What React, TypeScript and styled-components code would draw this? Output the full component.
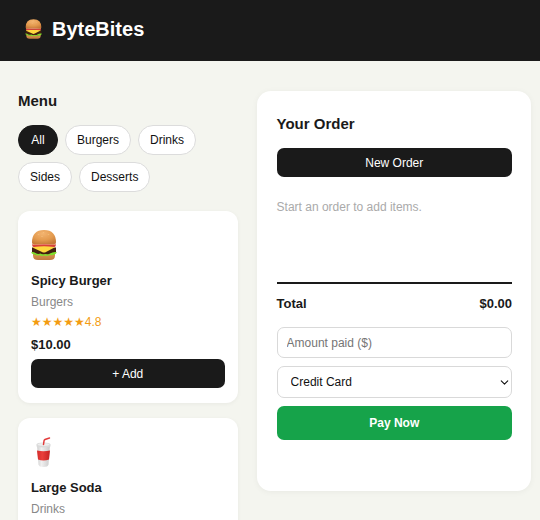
import React, { useState } from "react";
import styled, { createGlobalStyle, css } from "styled-components";
import { ChevronDown } from "lucide-react";

const GlobalStyle = createGlobalStyle`
  *, *::before, *::after { box-sizing: border-box; }
  body {
    margin: 0;
    background: #f4f5ef;
    color: #1a1a1a;
    overflow-x: hidden;
    scrollbar-width: none;
  }
  body, button, input, select {
    font-family: "Liberation Sans", Arial, sans-serif;
    font-size: 12px;
  }
  h1, h2, h3, p { margin: 0; }
`;

const Header = styled.header`
  display: flex;
  align-items: center;
  gap: 10px;
  height: 61px;
  padding: 0 25px 4px;
  background: #1a1a1a;
  color: #fff;
`;

const Brand = styled.h1`
  font-size: 20px;
  line-height: 28px;
`;

const Layout = styled.main`
  display: grid;
  grid-template-columns: minmax(0, 4fr) minmax(0, 5fr);
  align-items: start;
  gap: 19px;
  padding: 30px 9px 30px 18px;
`;

const SectionTitle = styled.h2`
  font-size: 15px;
  line-height: 20px;
`;

const Filters = styled.div`
  display: flex;
  flex-wrap: wrap;
  gap: 7px;
  margin: 14px 0 19px;
`;

const Pill = styled.button<{ $active: boolean }>`
  height: 30px;
  padding: 0 11px;
  border: 1px solid #dcdcdc;
  border-radius: 15px;
  min-width: 40px;
  background: #fff;
  color: #111;
  cursor: pointer;
  ${({ $active }) =>
    $active &&
    css`
      border-color: #1a1a1a;
      background: #1a1a1a;
      color: #fff;
    `}
`;

const MenuList = styled.div`
  display: grid;
  gap: 15px;
`;

const Card = styled.article`
  display: flex;
  flex-direction: column;
  padding: 15px 13px;
  border-radius: 12px;
  background: #fff;
  box-shadow: 0 1px 4px rgba(0, 0, 0, 0.05);
`;

const CardArt = styled.div`
  display: flex;
  align-items: center;
  height: 38px;
  margin-bottom: 5px;
`;

const ItemName = styled.h3`
  font-size: 13px;
  line-height: 24px;
`;

const Category = styled.p`
  color: #888;
  line-height: 18px;
`;

const Rating = styled.p`
  display: flex;
  align-items: center;
  color: #f39c12;
  line-height: 22px;
`;

const Stars = styled.span`
  font-family: "DejaVu Sans", sans-serif;
`;

const Price = styled.p`
  font-size: 13px;
  font-weight: 700;
  line-height: 24px;
`;

const DarkButton = styled.button`
  width: 100%;
  height: 29px;
  padding: 0 12px;
  border: 0;
  border-radius: 7px;
  background: #1a1a1a;
  color: #fff;
  cursor: pointer;
`;

const AddButton = styled(DarkButton)`
  margin-top: 2px;
`;

const OrderPanel = styled.section`
  padding: 23px 19px 51px 20px;
  border-radius: 14px;
  background: #fff;
  box-shadow: 0 1px 6px rgba(0, 0, 0, 0.05);
`;

const OrderTitle = styled(SectionTitle)`
  margin-bottom: 14px;
`;

const OrderItems = styled.div`
  min-height: 105px;
  padding-top: 20px;
  color: #aaa;
  line-height: 20px;
`;

const TotalRow = styled.div`
  display: flex;
  justify-content: space-between;
  padding: 10px 0 13px;
  border-top: 2px solid #1a1a1a;
  font-size: 13px;
  font-weight: 700;
  line-height: 20px;
`;

const Form = styled.form`
  display: grid;
  gap: 8px;
`;

const fieldStyle = css`
  width: 100%;
  border: 1px solid #d9d9d9;
  border-radius: 7px;
  background: #fff;
  color: #111;
`;

const AmountInput = styled.input`
  ${fieldStyle}
  height: 31px;
  padding: 0 9px;
  &::placeholder { color: #757575; }
`;

const SelectWrap = styled.div`
  position: relative;
  display: grid;
  align-items: center;
`;

const MethodSelect = styled.select`
  ${fieldStyle}
  height: 32px;
  padding: 0 24px 0 13px;
  appearance: none;
`;

const SelectArrow = styled(ChevronDown)`
  position: absolute;
  right: 1px;
  color: #111;
  pointer-events: none;
`;

const PayButton = styled(DarkButton)`
  height: 34px;
  background: #16a34a;
  font-weight: 700;
`;

function Burger({ size }: { size: number }) {
  return (
    <svg width={size} height={Math.round(size * 1.15)} viewBox="0 0 52 60" aria-hidden="true">
      <defs>
        <radialGradient id="bun" cx="45%" cy="25%" r="75%">
          <stop offset="0" stopColor="#f3b470" />
          <stop offset="0.6" stopColor="#e39a4e" />
          <stop offset="1" stopColor="#c67a38" />
        </radialGradient>
        <linearGradient id="heel" x1="0" y1="0" x2="0" y2="1">
          <stop offset="0" stopColor="#dc9a50" />
          <stop offset="1" stopColor="#c07a3e" />
        </linearGradient>
      </defs>
      <path d="M4 46H48V51Q48 60 38 60H14Q4 60 4 51Z" fill="url(#heel)" />
      <path d="M2 35H50V44Q48 49 42 49H10Q4 49 2 44Z" fill="#42200f" />
      <path d="M1 44Q5 43 9 46Q14 49 19 47Q24 50 29 48Q34 50 38 47Q44 43 51 44Q52 47 47 49Q43 51 38 50Q32 53 27 51Q21 53 17 50Q12 52 8 49Q0 48 1 44Z" fill="#7fe02c" />
      <path d="M3 33Q26 30 49 33L45 36L30 44Q26 46 22 44L5 36Z" fill="#ffd83f" />
      <path d="M3 28H49Q51 33 46 34Q26 31 6 34Q1 33 3 28Z" fill="#d9403a" />
      <path d="M4 28Q26 25 48 28V30Q26 28 4 30Z" fill="#f4a28f" />
      <path d="M2 25Q2 0 26 0Q50 0 50 25Q50 30 44 29Q26 27 8 29Q2 30 2 25Z" fill="url(#bun)" />
      <g fill="#fbd08c" opacity="0.5">
        <ellipse cx="15" cy="9" rx="1.6" ry="1" />
        <ellipse cx="25" cy="5" rx="1.6" ry="1" />
        <ellipse cx="35" cy="9" rx="1.6" ry="1" />
        <ellipse cx="22" cy="13" rx="1.6" ry="1" />
      </g>
    </svg>
  );
}

function Soda() {
  return (
    <svg width="26" height="32" viewBox="0 0 52 64" aria-hidden="true">
      <defs>
        <linearGradient id="cup" x1="0" y1="0" x2="1" y2="0">
          <stop offset="0" stopColor="#cfcfcf" />
          <stop offset="0.35" stopColor="#f0f0f0" />
          <stop offset="1" stopColor="#cacaca" />
        </linearGradient>
        <linearGradient id="label" x1="0" y1="0" x2="1" y2="0">
          <stop offset="0" stopColor="#d42c2a" />
          <stop offset="0.4" stopColor="#ea3f3b" />
          <stop offset="1" stopColor="#c52222" />
        </linearGradient>
      </defs>
      <path d="M12 18H38L35 57Q34 62 25 62Q16 62 15 57Z" fill="url(#cup)" />
      <path d="M12 29Q25 32 38 29L36 47Q25 51 14 47Z" fill="url(#label)" />
      <path d="M11 17Q11 13 25 13Q39 13 39 17V21Q25 25 11 21Z" fill="#dadada" />
      <ellipse cx="25" cy="17" rx="12" ry="3" fill="#eee" />
      <path d="M25 17L26 10Q26 8 28 7L37 4" fill="none" stroke="#e23b3b" strokeWidth="3" strokeLinecap="round" />
    </svg>
  );
}

const categories = ["All", "Burgers", "Drinks", "Sides", "Desserts"];

const menu = [
  { name: "Spicy Burger", category: "Burgers", rating: "4.8", price: "$10.00", art: <Burger size={26} /> },
  { name: "Large Soda", category: "Drinks", rating: "4.5", price: "$3.00", art: <Soda /> },
];

export default function App() {
  const [active, setActive] = useState("All");
  const items = menu.filter((item) => active === "All" || item.category === active);

  return (
    <>
      <GlobalStyle />
      <Header>
        <Burger size={17} />
        <Brand>ByteBites</Brand>
      </Header>
      <Layout>
        <section aria-labelledby="menu-title">
          <SectionTitle id="menu-title">Menu</SectionTitle>
          <Filters>
            {categories.map((name) => (
              <Pill
                key={name}
                type="button"
                $active={name === active}
                aria-pressed={name === active}
                onClick={() => setActive(name)}
              >
                {name}
              </Pill>
            ))}
          </Filters>
          <MenuList>
            {items.map((item) => (
              <Card key={item.name}>
                <CardArt>{item.art}</CardArt>
                <ItemName>{item.name}</ItemName>
                <Category>{item.category}</Category>
                <Rating>
                  <Stars>★★★★★</Stars>
                  {item.rating}
                </Rating>
                <Price>{item.price}</Price>
                <AddButton type="button">+ Add</AddButton>
              </Card>
            ))}
          </MenuList>
        </section>
        <OrderPanel aria-labelledby="order-title">
          <OrderTitle id="order-title">Your Order</OrderTitle>
          <DarkButton type="button">New Order</DarkButton>
          <OrderItems>
            <p>Start an order to add items.</p>
          </OrderItems>
          <TotalRow>
            <span>Total</span>
            <span>$0.00</span>
          </TotalRow>
          <Form onSubmit={(event) => event.preventDefault()}>
            <AmountInput type="text" inputMode="decimal" placeholder="Amount paid ($)" aria-label="Amount paid ($)" />
            <SelectWrap>
              <MethodSelect aria-label="Payment method" defaultValue="Credit Card">
                <option>Credit Card</option>
                <option>Cash</option>
              </MethodSelect>
              <SelectArrow size={13} strokeWidth={2} aria-hidden="true" />
            </SelectWrap>
            <PayButton type="submit">Pay Now</PayButton>
          </Form>
        </OrderPanel>
      </Layout>
    </>
  );
}
